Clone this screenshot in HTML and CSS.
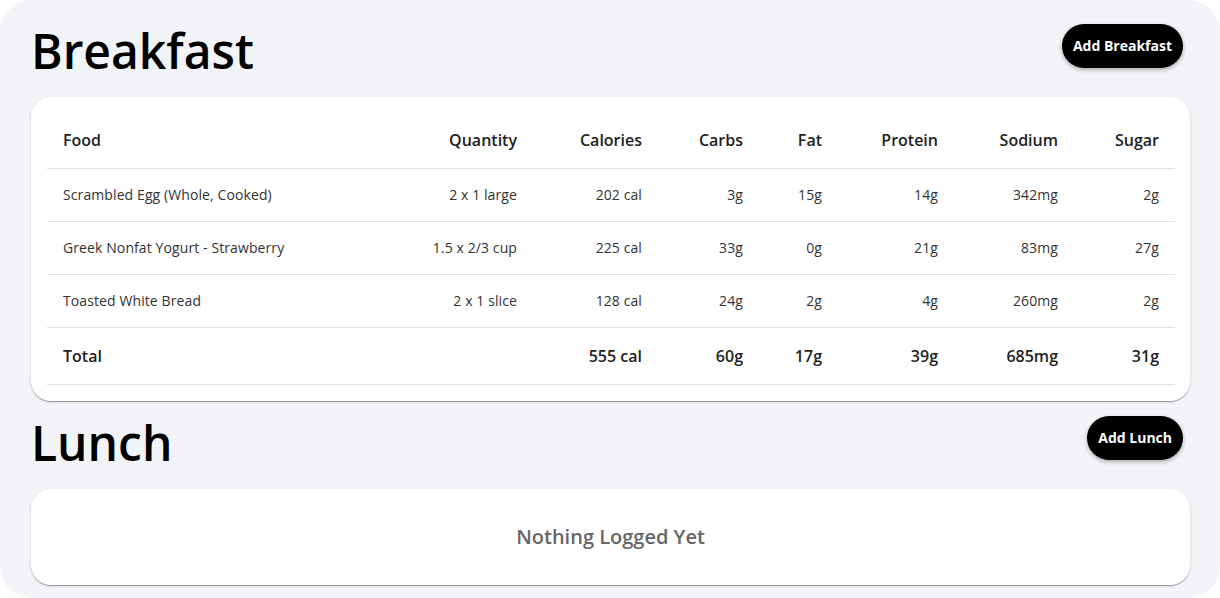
FILE: index.html
```html
<!DOCTYPE html>
<html lang="en">
<head>
<meta charset="utf-8">
<title>Food Log</title>
<link rel="stylesheet" href="styles.css">
</head>
<body>
<main class="page">
  <section class="meal">
    <div class="meal-head">
      <h1 class="meal-title">Breakfast</h1>
      <button class="add-btn" type="button">Add Breakfast</button>
    </div>
    <div class="card">
      <table class="food-table">
        <colgroup>
          <col class="c-food"><col class="c-qty"><col class="c-cal"><col class="c-carbs"><col class="c-fat"><col class="c-protein"><col class="c-sodium"><col class="c-sugar">
        </colgroup>
        <thead>
          <tr>
            <th class="left">Food</th>
            <th>Quantity</th>
            <th>Calories</th>
            <th>Carbs</th>
            <th>Fat</th>
            <th>Protein</th>
            <th>Sodium</th>
            <th>Sugar</th>
          </tr>
        </thead>
        <tbody>
          <tr>
            <td class="left">Scrambled Egg (Whole, Cooked)</td>
            <td>2 x 1 large</td>
            <td>202 cal</td>
            <td>3g</td>
            <td>15g</td>
            <td>14g</td>
            <td>342mg</td>
            <td>2g</td>
          </tr>
          <tr>
            <td class="left">Greek Nonfat Yogurt - Strawberry</td>
            <td>1.5 x 2/3 cup</td>
            <td>225 cal</td>
            <td>33g</td>
            <td>0g</td>
            <td>21g</td>
            <td>83mg</td>
            <td>27g</td>
          </tr>
          <tr>
            <td class="left">Toasted White Bread</td>
            <td>2 x 1 slice</td>
            <td>128 cal</td>
            <td>24g</td>
            <td>2g</td>
            <td>4g</td>
            <td>260mg</td>
            <td>2g</td>
          </tr>
          <tr class="total">
            <td class="left">Total</td>
            <td></td>
            <td>555 cal</td>
            <td>60g</td>
            <td>17g</td>
            <td>39g</td>
            <td>685mg</td>
            <td>31g</td>
          </tr>
        </tbody>
      </table>
    </div>
  </section>

  <section class="meal">
    <div class="meal-head">
      <h1 class="meal-title">Lunch</h1>
      <button class="add-btn" type="button">Add Lunch</button>
    </div>
    <div class="card empty">
      <p class="empty-text">Nothing Logged Yet</p>
    </div>
  </section>
</main>
</body>
</html>
```

FILE: styles.css
```css
* { box-sizing: border-box; }

html, body {
  margin: 0;
  padding: 0;
  background: #ffffff;
}

body {
  font-family: "Open Sans", "Noto Sans", sans-serif;
  color: #000;
}

.page {
  height: 598px;
  background: #f3f4f8;
  border-radius: 32px;
  padding: 18px 30px 0 31px;
  display: flex;
  flex-direction: column;
  gap: 9px;
}

.meal-head {
  display: flex;
  justify-content: space-between;
  align-items: flex-start;
  margin-bottom: 14px;
}

.meal-title {
  margin: 0;
  font-size: 48px;
  font-weight: 600;
  line-height: 65px;
  color: #000;
}

.add-btn {
  margin: 6px 7px 0 0;
  font-family: "Open Sans", "Noto Sans", sans-serif;
  font-size: 14px;
  font-weight: 700;
  line-height: 20px;
  color: #fff;
  background: #000;
  border: none;
  border-radius: 22px;
  padding: 12px 11px;
  box-shadow: 0 2px 4px rgba(0, 0, 0, 0.3);
}

.card {
  background: #fff;
  border-radius: 20px;
  box-shadow: 0 2px 1px -1px rgba(0, 0, 0, 0.2), 0 1px 1px 0 rgba(0, 0, 0, 0.14), 0 1px 3px 0 rgba(0, 0, 0, 0.12);
  padding: 16px;
}

.food-table {
  width: 100%;
  border-collapse: collapse;
  table-layout: fixed;
}

.c-food { width: 336px; }
.c-qty { width: 150px; }
.c-cal { width: 125px; }
.c-carbs { width: 101px; }
.c-fat { width: 79px; }
.c-protein { width: 116px; }
.c-sodium { width: 120px; }
.c-sugar { width: 101px; }

.food-table th,
.food-table td {
  padding: 16px;
  text-align: right;
  border-bottom: 1px solid #e0e0e0;
  white-space: nowrap;
}

.food-table th {
  font-size: 16px;
  font-weight: 600;
  line-height: 23px;
  color: #222;
}

.food-table td {
  font-size: 14px;
  font-weight: 400;
  line-height: 20px;
  letter-spacing: 0.1px;
  color: #333;
}

.food-table .left { text-align: left; }

.food-table tr.total td {
  font-size: 16px;
  font-weight: 600;
  line-height: 24px;
  letter-spacing: 0;
  color: #222;
}

.card.empty {
  padding: 32px 16px;
}

.empty-text {
  margin: 0;
  text-align: center;
  font-size: 20px;
  font-weight: 600;
  line-height: 32px;
  color: #666;
}
```
